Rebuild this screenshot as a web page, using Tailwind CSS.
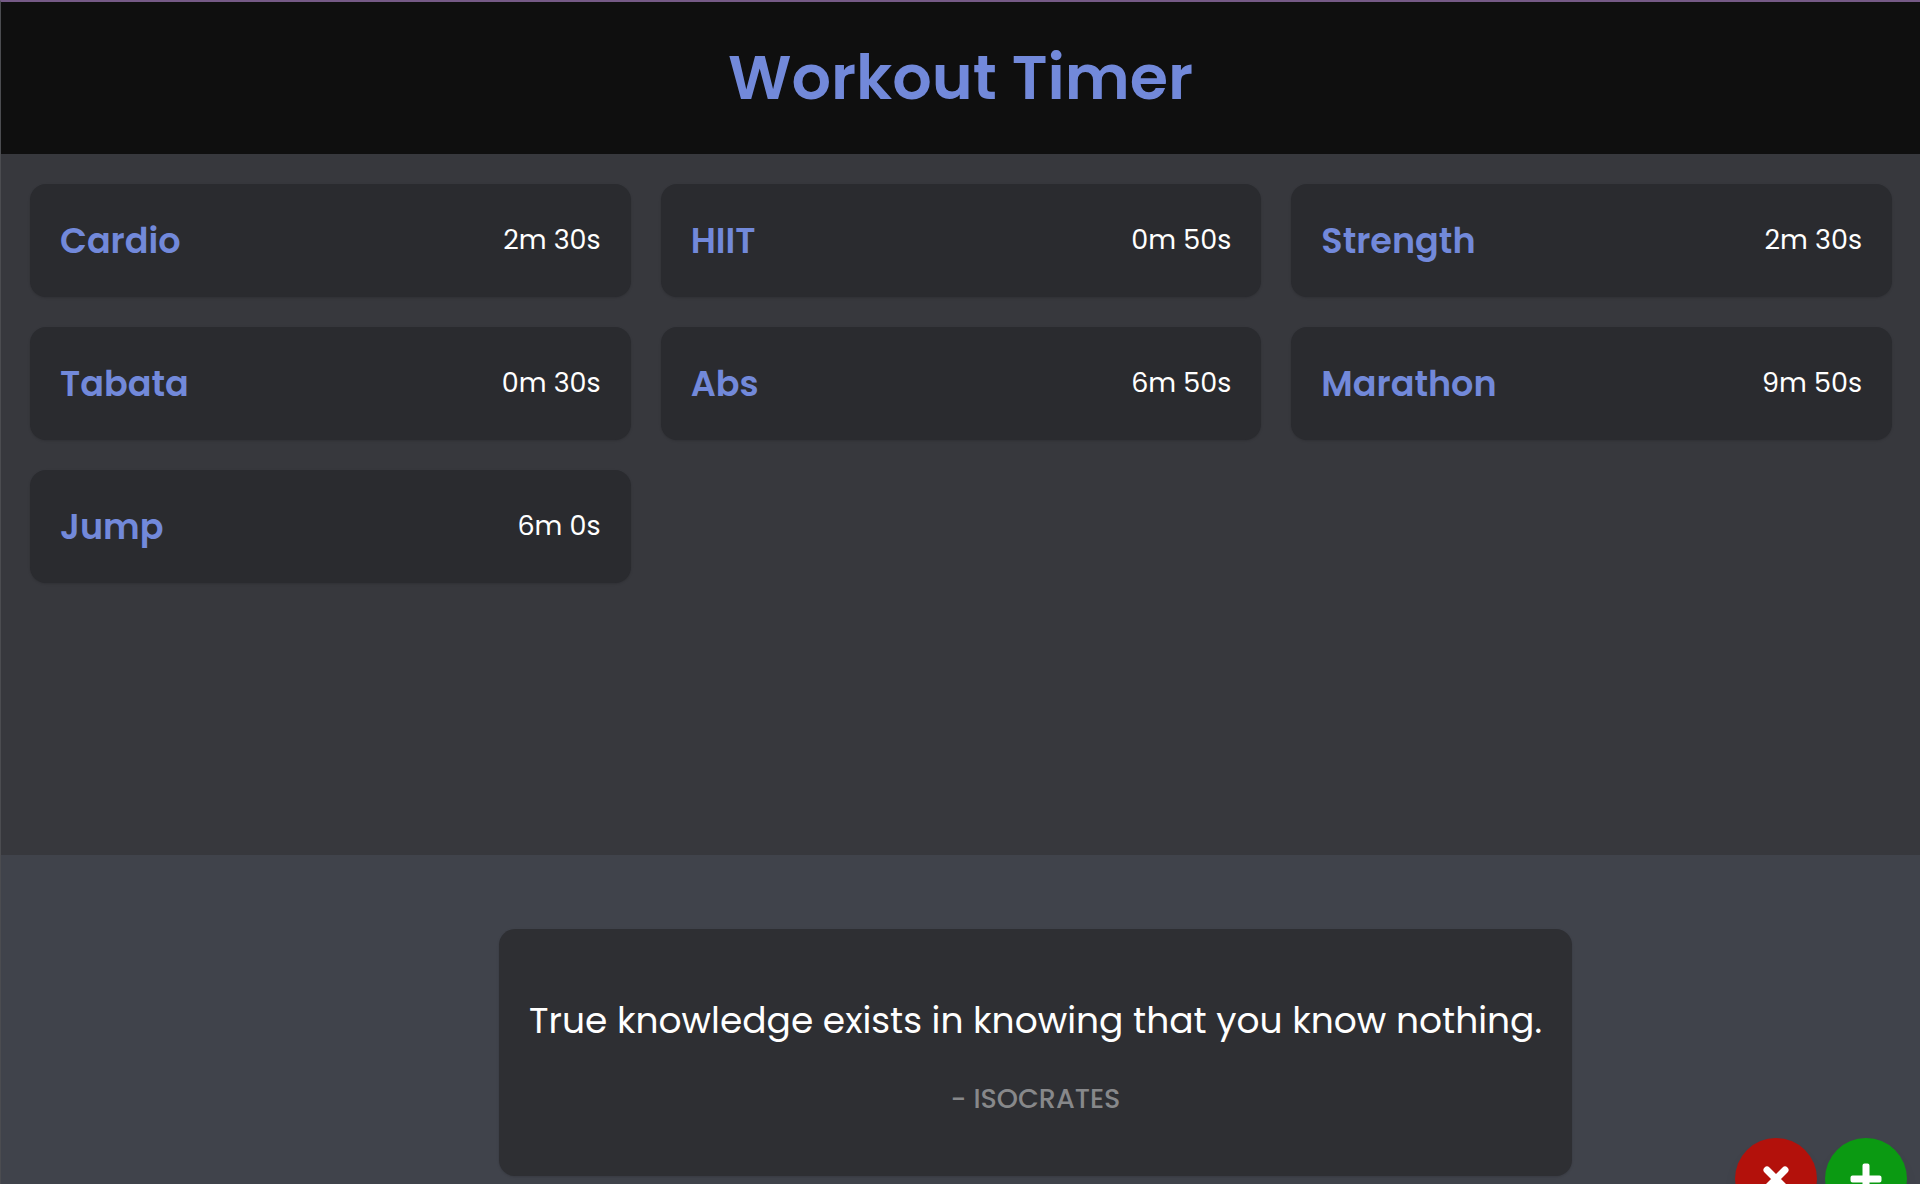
<!DOCTYPE html>
<html lang="en">
<head>
  <meta charset="UTF-8" />
  <meta name="viewport" content="width=device-width, initial-scale=1.0" />
  <title>Workout Timer</title>
  <script src="https://cdn.jsdelivr.net/npm/@tailwindcss/browser@4"></script>
</head>
<body class="min-h-screen flex flex-col overflow-hidden bg-[#37383d] border-t-2 border-t-[#755a86] border-l border-l-[#4b4c50] text-white font-['Poppins','Inter',sans-serif]">

  <!-- Header -->
  <header class="bg-[#0f0f0f] py-9 text-center">
    <h1 class="text-[62px] leading-[80px] font-semibold text-[#7289da]">Workout Timer</h1>
  </header>

  <!-- Workouts -->
  <main class="flex-1 pl-[29px] pr-7 py-[30px]">
    <ul class="grid grid-cols-3 gap-[30px] text-[27px]">
      <li class="flex items-center justify-between rounded-2xl bg-[#2a2b2f] p-[30px] shadow-sm">
        <h2 class="text-[35px] leading-[53px] font-semibold text-[#7289da]">Cardio</h2>
        <p>2m 30s</p>
      </li>
      <li class="flex items-center justify-between rounded-2xl bg-[#2a2b2f] p-[30px] shadow-sm">
        <h2 class="text-[35px] leading-[53px] font-semibold text-[#7289da]">HIIT</h2>
        <p>0m 50s</p>
      </li>
      <li class="flex items-center justify-between rounded-2xl bg-[#2a2b2f] p-[30px] shadow-sm">
        <h2 class="text-[35px] leading-[53px] font-semibold text-[#7289da]">Strength</h2>
        <p>2m 30s</p>
      </li>
      <li class="flex items-center justify-between rounded-2xl bg-[#2a2b2f] p-[30px] shadow-sm">
        <h2 class="text-[35px] leading-[53px] font-semibold text-[#7289da]">Tabata</h2>
        <p>0m 30s</p>
      </li>
      <li class="flex items-center justify-between rounded-2xl bg-[#2a2b2f] p-[30px] shadow-sm">
        <h2 class="text-[35px] leading-[53px] font-semibold text-[#7289da]">Abs</h2>
        <p>6m 50s</p>
      </li>
      <li class="flex items-center justify-between rounded-2xl bg-[#2a2b2f] p-[30px] shadow-sm">
        <h2 class="text-[35px] leading-[53px] font-semibold text-[#7289da]">Marathon</h2>
        <p>9m 50s</p>
      </li>
      <li class="flex items-center justify-between rounded-2xl bg-[#2a2b2f] p-[30px] shadow-sm">
        <h2 class="text-[35px] leading-[53px] font-semibold text-[#7289da]">Jump</h2>
        <p>6m 0s</p>
      </li>
    </ul>
  </main>

  <!-- Quote -->
  <footer class="flex justify-center bg-[#40434b] pt-[74px] pb-2 pl-[150px]">
    <blockquote class="rounded-2xl bg-[#2e2f33] px-[30px] pt-16 pb-14 text-center shadow-sm">
      <p class="text-[36px] leading-[56px]">True knowledge exists in knowing that you know nothing.</p>
      <cite class="mt-7 block text-[27px] leading-[43px] font-medium not-italic text-[#87888a]">- ISOCRATES</cite>
    </blockquote>
  </footer>

  <!-- Action buttons -->
  <div class="fixed right-[13px] -bottom-9 flex gap-2">
    <button type="button" aria-label="Delete workout" class="flex size-[82px] items-center justify-center rounded-full bg-[#b3110b] shadow-lg">
      <svg class="size-8" viewBox="0 0 32 32" fill="none" stroke="white" stroke-width="7" stroke-linecap="round"><path d="M7 7l18 18M25 7L7 25" /></svg>
    </button>
    <button type="button" aria-label="Add workout" class="flex size-[82px] items-center justify-center rounded-full bg-[#0b9a12] shadow-lg">
      <svg class="size-8" viewBox="0 0 32 32" fill="white"><path d="M14.5 .5h3a2 2 0 0 1 2 2v10h10a2 2 0 0 1 2 2v3a2 2 0 0 1-2 2h-10v10a2 2 0 0 1-2 2h-3a2 2 0 0 1-2-2v-10h-10a2 2 0 0 1-2-2v-3a2 2 0 0 1 2-2h10v-10a2 2 0 0 1 2-2z" /></svg>
    </button>
  </div>

</body>
</html>
